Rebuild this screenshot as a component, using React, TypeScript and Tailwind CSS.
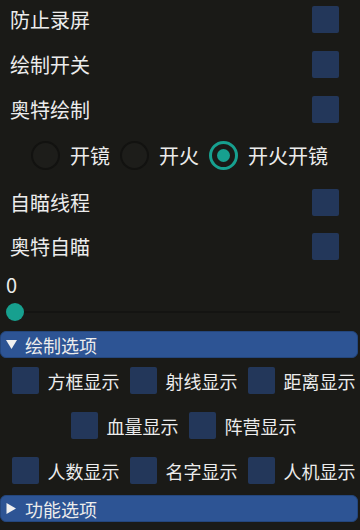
const font = { fontFamily: '"Noto Sans CJK SC", "Noto Sans", sans-serif' }

function Box() {
  return <div className="h-[27px] w-[27px] shrink-0 rounded-[2px] bg-[#23375a]" />
}

function ToggleRow({ label, className = "" }: { label: string; className?: string }) {
  return (
    <div className={`flex h-[27px] items-center justify-between pl-[10px] pr-[21px] ${className}`}>
      <span className="text-[20px] leading-none text-[#ececec]">{label}</span>
      <Box />
    </div>
  )
}

function Radio({ label, checked }: { label: string; checked?: boolean }) {
  return (
    <div className="flex items-center gap-[10px]">
      {checked ? (
        <div className="flex h-[29px] w-[29px] items-center justify-center rounded-full border-[3px] border-[#17a08f] bg-[#1a1a17]">
          <div className="h-[13px] w-[13px] rounded-full bg-[#17a08f]" />
        </div>
      ) : (
        <div className="h-[29px] w-[29px] rounded-full border-2 border-[#121210] bg-[#1d1d1a]" />
      )}
      <span className="text-[20px] leading-none text-[#ececec]">{label}</span>
    </div>
  )
}

function Option({ label }: { label: string }) {
  return (
    <div className="flex items-center gap-[9px]">
      <Box />
      <span className="w-[72px] text-[18px] leading-none text-[#ececec]">{label}</span>
    </div>
  )
}

function Header({ label, open }: { label: string; open?: boolean }) {
  return (
    <div className="flex h-[27px] w-[358px] items-center gap-[8px] rounded-[6px] border border-[#24467c] bg-[#2d5494] pl-[5px]">
      <svg width="11" height="11" viewBox="0 0 11 11">
        {open ? <path d="M0 1 L11 1 L5.5 10 Z" fill="#f0f0f0" /> : <path d="M0.5 0 L10 5.5 L0.5 11 Z" fill="#f0f0f0" />}
      </svg>
      <span className="text-[18px] leading-none text-[#ececec]">{label}</span>
    </div>
  )
}

export default function App() {
  return (
    <div className="h-[530px] w-[360px] overflow-hidden bg-[#1a1a17] pt-[6px]" style={font}>
      <ToggleRow label="防止录屏" />
      <ToggleRow label="绘制开关" className="mt-[18px]" />
      <ToggleRow label="奥特绘制" className="mt-[18px]" />

      <div className="mt-[18px] flex items-center justify-center gap-[10px] pr-[1px]">
        <Radio label="开镜" />
        <Radio label="开火" />
        <Radio label="开火开镜" checked />
      </div>

      <ToggleRow label="自瞄线程" className="mt-[19px]" />
      <ToggleRow label="奥特自瞄" className="mt-[17px]" />

      <div className="mt-[11px] pl-[6px] text-[20px] leading-[28px] text-[#ececec]">0</div>
      <div className="relative mt-[3px] h-[20px]">
        <div className="absolute left-[6px] right-[20px] top-[9px] h-[2px] bg-[#141412]" />
        <div className="absolute left-[6px] top-[1px] h-[18px] w-[18px] rounded-full bg-[#17a08f]" />
      </div>

      <div className="mt-[9px]">
        <Header label="绘制选项" open />
      </div>

      <div className="mt-[9px] flex justify-center gap-[10px] pl-[7px]">
        <Option label="方框显示" />
        <Option label="射线显示" />
        <Option label="距离显示" />
      </div>
      <div className="mt-[18px] flex justify-center gap-[10px] pl-[7px]">
        <Option label="血量显示" />
        <Option label="阵营显示" />
      </div>
      <div className="mt-[18px] flex justify-center gap-[10px] pl-[7px]">
        <Option label="人数显示" />
        <Option label="名字显示" />
        <Option label="人机显示" />
      </div>

      <div className="mt-[11px]">
        <Header label="功能选项" />
      </div>
    </div>
  )
}
